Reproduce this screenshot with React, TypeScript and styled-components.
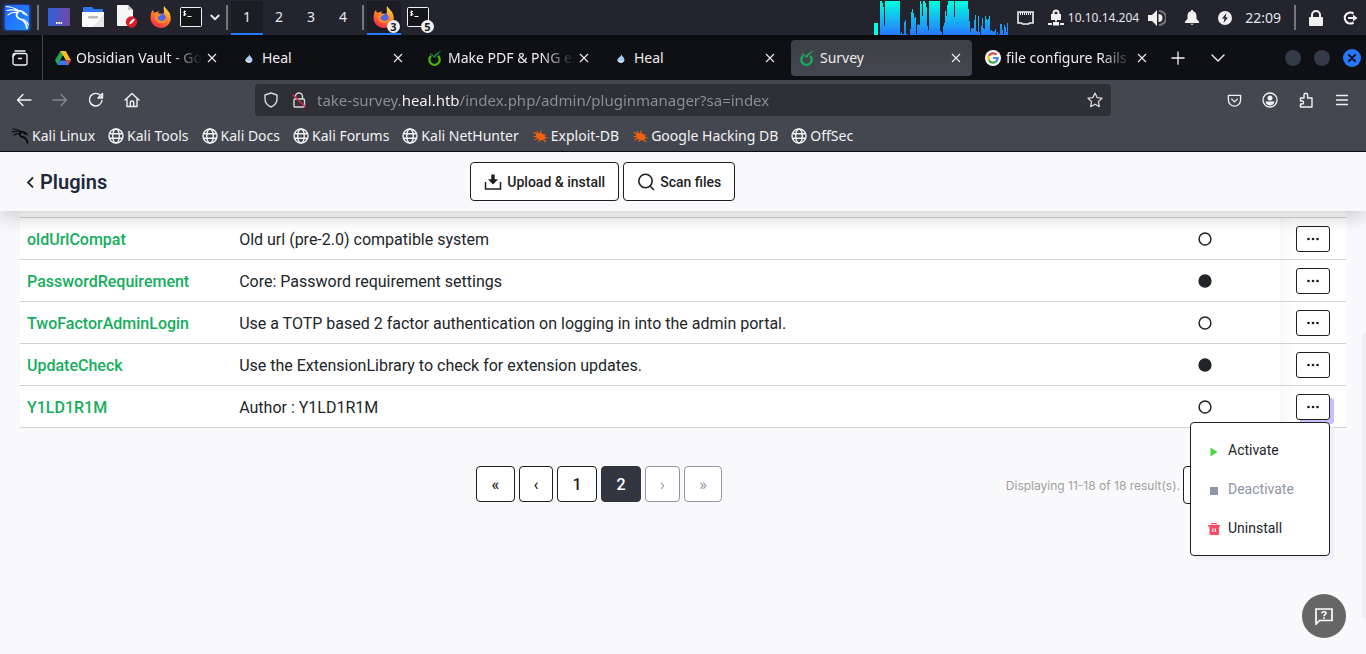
import React from "react";
import styled, { createGlobalStyle, css } from "styled-components";

const GlobalStyle = createGlobalStyle`
  * { box-sizing: border-box; }
  body { margin: 0; background: #f9f9fb; }
  button, input, select { font: inherit; }
  svg { display: block; flex: none; }
`;

const systemFont = `"Noto Sans", "Open Sans", sans-serif`;
const webFont = `Roboto, "Liberation Sans", sans-serif`;

const Screen = styled.div`
  display: flex;
  flex-direction: column;
  min-height: 100vh;
  overflow: hidden;
`;

/* ---------- Desktop panel ---------- */

const Panel = styled.header`
  display: flex;
  align-items: center;
  justify-content: space-between;
  height: 35px;
  background: #23242d;
  color: #e4e6ea;
  font-family: ${systemFont};
  padding: 0 8px 0 2px;
`;

const PanelGroup = styled.div<{ $gap?: number }>`
  display: flex;
  align-items: center;
  height: 100%;
  gap: ${(p) => p.$gap ?? 0}px;
`;

const PanelButton = styled.button<{ $width: number; $active?: boolean }>`
  position: relative;
  display: flex;
  align-items: center;
  justify-content: center;
  width: ${(p) => p.$width}px;
  height: 34px;
  padding: 0;
  border: 0;
  border-bottom: 2px solid ${(p) => (p.$active ? "#2777ff" : "transparent")};
  background: ${(p) => (p.$active ? "#1b1c24" : "transparent")};
  color: #e8e9ec;
  font-size: 14px;
`;

const Separator = styled.span`
  width: 2px;
  height: 25px;
  background: #75767b;
`;

const Badge = styled.span`
  position: absolute;
  right: 1px;
  bottom: 0;
  width: 13px;
  height: 13px;
  border-radius: 50%;
  background: #f0f0f0;
  color: #16171c;
  font-size: 11px;
  font-weight: 700;
  line-height: 13px;
  text-align: center;
`;

const Address = styled.span`
  font-size: 12px;
`;

const Clock = styled.time`
  font-size: 14px;
`;

/* ---------- Browser window ---------- */

const TabStrip = styled.nav`
  display: flex;
  align-items: center;
  height: 45px;
  background: linear-gradient(#0a0b0e, #0f1014 6px);
  color: #ececee;
  font-family: ${systemFont};
  padding-right: 5px;
`;

const ChromeButton = styled.button<{ $width?: number; $dim?: boolean }>`
  display: flex;
  align-items: center;
  justify-content: center;
  width: ${(p) => p.$width ?? 36}px;
  height: 32px;
  padding: 0;
  border: 0;
  background: none;
  color: ${(p) => (p.$dim ? "#85868b" : "#f2f2f4")};
`;

const ArchiveCell = styled.div`
  display: flex;
  align-items: center;
  width: 43px;
  height: 100%;
  padding-left: 2px;
  border-right: 1px solid #46474b;
  margin-right: 4px;
`;

const Tabs = styled.div`
  display: flex;
  gap: 5px;
`;

const Tab = styled.div<{ $active?: boolean }>`
  display: flex;
  align-items: center;
  gap: 5px;
  width: 181px;
  height: 36px;
  padding: 0 6px 0 8px;
  border-radius: 4px;
  background: ${(p) => (p.$active ? "linear-gradient(#3c3f45, #44474f)" : "transparent")};
`;

const TabTitle = styled.span<{ $fade?: boolean }>`
  flex: 1;
  min-width: 0;
  margin-right: -5px;
  overflow: hidden;
  white-space: nowrap;
  font-size: 14px;
  line-height: 20px;
  ${(p) =>
    p.$fade &&
    css`
      mask-image: linear-gradient(to left, transparent, #000 32px);
    `}
`;

const CloseTab = styled.button`
  display: flex;
  align-items: center;
  justify-content: center;
  width: 20px;
  height: 20px;
  padding: 0;
  border: 0;
  background: none;
  color: #ececee;
`;

const WindowControls = styled.div`
  display: flex;
  align-items: center;
  gap: 13px;
  margin-left: auto;
`;

const WindowDot = styled.button<{ $close?: boolean }>`
  display: flex;
  align-items: center;
  justify-content: center;
  width: ${(p) => (p.$close ? 18 : 16)}px;
  height: ${(p) => (p.$close ? 18 : 16)}px;
  padding: 0;
  border: 0;
  border-radius: 50%;
  color: #0d1524;
  background: ${(p) => (p.$close ? "#2777ff" : "#353a48")};
`;

const Toolbar = styled.div`
  display: flex;
  align-items: center;
  height: 40px;
  padding: 0 6px;
  background: #44474f;
  font-family: ${systemFont};
`;

const Spacer = styled.span`
  flex: 1;
`;

const UrlBar = styled.form`
  display: flex;
  align-items: center;
  flex: 8;
  height: 32px;
  padding: 0 8px;
  border-radius: 4px;
  background: #2f3035;
  color: #d8d8da;
`;

const UrlIcons = styled.span`
  display: flex;
  align-items: center;
  gap: 12px;
  margin-right: 10px;
`;

const UrlInput = styled.input`
  flex: 1;
  min-width: 0;
  height: 24px;
  padding: 0;
  border: 0;
  outline: 0;
  font-size: 15px;
  color: #8f9094;
  -webkit-text-fill-color: transparent;
  background: linear-gradient(to right, #8f9094 84px, #fbfbfe 84px, #fbfbfe 142px, #8f9094 142px);
  -webkit-background-clip: text;
  background-clip: text;
`;

const Bookmarks = styled.nav`
  display: flex;
  align-items: center;
  gap: 13px;
  height: 32px;
  padding: 0 12px;
  border-bottom: 1px solid #0d0e12;
  background: #44474f;
  font-family: ${systemFont};
`;

const Bookmark = styled.a`
  display: flex;
  align-items: center;
  gap: 3px;
  color: #f2f2f4;
  font-size: 14px;
  line-height: 20px;
  text-decoration: none;
`;

/* ---------- Plugin manager page ---------- */

const Page = styled.main`
  position: relative;
  flex: 1;
  background: #f9f9fb;
  color: #212529;
  font-family: ${webFont};
`;

const PageHeader = styled.div`
  position: relative;
  z-index: 1;
  display: grid;
  grid-template-columns: repeat(3, 1fr);
  align-items: center;
  height: 59px;
  background: #f9f9fb;
  box-shadow: 0 8px 16px rgba(0, 0, 0, 0.15);
`;

const BackLink = styled.a`
  display: flex;
  align-items: center;
  gap: 6px;
  padding-left: 26px;
  color: #1e2a3c;
  text-decoration: none;
`;

const PageTitle = styled.h1`
  margin: 0;
  font-size: 20px;
  font-weight: 600;
`;

const HeaderActions = styled.div`
  display: flex;
  gap: 4px;
  padding-left: 15px;
`;

const OutlineButton = styled.button`
  display: flex;
  align-items: center;
  gap: 4px;
  height: 39px;
  padding: 0 13px;
  border: 1px solid #1e1e1e;
  border-radius: 4px;
  background: #fff;
  color: #1e1e1e;
  font-size: 14px;
  font-weight: 500;
  white-space: nowrap;
`;

const PageBody = styled.div`
  padding: 0 20px;
`;

const PluginTable = styled.table`
  width: 100%;
  table-layout: fixed;
  border-spacing: 0;
  background: #fff;
`;

const HeadCell = styled.th<{ $width?: string }>`
  width: ${(p) => p.$width ?? "auto"};
  height: 7px;
  padding: 0;
  border-bottom: 1px solid #d0d2d6;
`;

const Cell = styled.td`
  height: 42px;
  padding: 2px 7px 0;
  border-bottom: 1px solid #d0d2d6;
  font-size: 16px;
  line-height: 24px;
`;

const StatusCell = styled(Cell)`
  padding: 0;
`;

const ActionCell = styled(Cell)`
  padding: 0 16px;
  background: linear-gradient(to right, #f8f8f8, #fff 16px);
`;

const PluginLink = styled.a`
  color: #14ae5c;
  font-weight: 500;
  text-decoration: none;
`;

const StatusMark = styled.svg`
  margin: 0 auto;
`;

const MenuAnchor = styled.div`
  position: relative;
  height: 26px;
`;

const MoreButton = styled.button<{ $open: boolean }>`
  display: flex;
  align-items: center;
  justify-content: center;
  width: 34px;
  height: 26px;
  padding: 0;
  border: 1px solid #1e1e1e;
  border-radius: 3px;
  background: #fff;
  color: #1e1e1e;
  box-shadow: ${(p) => (p.$open ? "4px 4px 0 #c9bfff" : "none")};
`;

const Menu = styled.ul`
  position: absolute;
  top: 28px;
  right: 0;
  z-index: 2;
  width: 140px;
  margin: 0;
  padding: 8px 0 7px;
  border: 1px solid #1e1e1e;
  border-radius: 4px;
  background: #fff;
  box-shadow: 4px 4px 0 #eeeff8;
  list-style: none;
`;

const MenuItem = styled.button`
  display: flex;
  align-items: center;
  gap: 7px;
  width: 100%;
  height: 39px;
  padding: 0 16px;
  border: 0;
  background: none;
  color: #212529;
  font-size: 14px;
  &:disabled {
    color: #9094a7;
  }
`;

const Footer = styled.div`
  display: grid;
  grid-template-columns: repeat(3, 1fr);
  align-items: start;
  margin-top: 38px;
`;

const Pager = styled.nav`
  display: flex;
  grid-column: 2;
  gap: 4px;
  padding-left: 14px;
`;

const PageButton = styled.button<{ $width: number; $current?: boolean }>`
  width: ${(p) => p.$width}px;
  height: 36px;
  padding: 0;
  border: 1px solid ${(p) => (p.$current ? "#333641" : "#1e1e1e")};
  border-radius: 4px;
  background: ${(p) => (p.$current ? "#333641" : "#fff")};
  color: ${(p) => (p.$current ? "#fff" : "#1e1e1e")};
  font-size: 16px;
  font-weight: 500;
  &:disabled {
    border-color: #9094a7;
    color: #9094a7;
    font-weight: 400;
  }
`;

const Summary = styled.div`
  display: flex;
  align-items: center;
  justify-content: flex-end;
  gap: 3px;
  padding-right: 16px;
  color: #a0a0a0;
  font-family: Inter, sans-serif;
  font-size: 12px;
  white-space: nowrap;
`;

const PageSize = styled.select`
  width: 147px;
  height: 38px;
  border: 1px solid #1e1e1e;
  border-radius: 4px;
  background: #fff;
  color: #1e1e1e;
  font-size: 16px;
`;

const HelpButton = styled.button`
  position: fixed;
  right: 20px;
  bottom: 16px;
  display: flex;
  align-items: center;
  justify-content: center;
  width: 44px;
  height: 44px;
  padding: 0;
  border: 0;
  border-radius: 50%;
  background: #666;
  color: #fff;
`;

const ScrollThumb = styled.span`
  position: absolute;
  top: 181px;
  right: 0;
  bottom: 36px;
  width: 4px;
  background: #f0f0f4;
`;

/* ---------- Drawings ---------- */

const KaliLogo = () => (
  <svg width="30" height="31" viewBox="0 0 30 31">
    <defs>
      <filter id="glow" x="-20%" y="-20%" width="140%" height="140%">
        <feGaussianBlur stdDeviation="1.5" />
      </filter>
      <linearGradient id="kali" x1="0" y1="0" x2="1" y2="1">
        <stop offset="0" stopColor="#1f60ff" />
        <stop offset="1" stopColor="#2490ff" />
      </linearGradient>
    </defs>
    <rect x="2" y="3" width="26" height="25" rx="2" fill="#1758e8" filter="url(#glow)" />
    <rect x="3" y="3" width="24" height="25" rx="2" fill="url(#kali)" />
    <g fill="none" stroke="#fff" strokeLinecap="round">
      <path d="M4 4.500c6 .5 9 1.500 12 4M5 8.500c4-1 7-1 11 .5M6 13c2-2 5-3 9-2.500" strokeWidth="1.200" />
      <path d="M14 8.500c5 0 8 1 10 4l-3-1.500" strokeWidth="1.500" />
      <path d="M16 10c-3 3-1 6 2 7 3 .8 6 3 7 9" strokeWidth="1.800" />
      <path d="M18 17c4 0 7 2 8.500 6" strokeWidth="1.100" />
    </g>
  </svg>
);

const DesktopIcon = () => (
  <svg width="22" height="18" viewBox="0 0 22 18">
    <defs>
      <linearGradient id="desk">
        <stop offset="0" stopColor="#2f62d9" />
        <stop offset="1" stopColor="#7548a8" />
      </linearGradient>
    </defs>
    <rect width="22" height="18" rx="1" fill="url(#desk)" />
    <path d="M8 14h1.500v2H8zm2.300 0h1.500v2h-1.500zm2.300 0h1.500v2h-1.500z" fill="#fff" />
  </svg>
);

const FolderIcon = () => (
  <svg width="22" height="20" viewBox="0 0 22 20">
    <path d="M1 1q0-1 1-1h8l2 2h8q1 0 1 1v4H1z" fill="#2f74f0" />
    <path d="M0 5h22v14q0 1-1 1H1q-1 0-1-1z" fill="#fafafa" />
    <path d="M22 7v13H11z" fill="#e8e8e8" />
    <rect x="6" y="9" width="10" height="2.500" rx="1.200" fill="#b9b9b9" />
  </svg>
);

const EditorIcon = () => (
  <svg width="22" height="23" viewBox="0 0 22 23">
    <path d="M1 1q0-1 1-1h10l5 5v15q0 1-1 1H2q-1 0-1-1z" fill="#f6f6f6" />
    <path d="M12 0l5 5h-5z" fill="#c8c8c8" />
    <circle cx="15.500" cy="17" r="5.700" fill="#d81e28" />
    <path d="M13 19.500l1-2.500 3.500-3.500 1.400 1.500-3.400 3.500z" fill="#fff" />
  </svg>
);

const FirefoxIcon = () => (
  <svg width="22" height="22" viewBox="0 0 22 22">
    <defs>
      <linearGradient id="fox" x1="0.8" y1="0" x2="0.3" y2="1">
        <stop offset="0" stopColor="#ffe14a" />
        <stop offset="0.45" stopColor="#ff8a2a" />
        <stop offset="1" stopColor="#f0264f" />
      </linearGradient>
    </defs>
    <path d="M14 0c1 2 3 3 4 5l1 1c4 7 1 15-8 16C3 22-1 15 1 8c0-2 1-3 2-4l1 3c1-1 2-1 3-1l3-1c-2 1-2 2-2 3h5c2-1 0-5 1-8z" fill="url(#fox)" />
    <circle cx="11" cy="12" r="4.700" fill="#4a5fe0" />
    <path d="M5 9c2-2 5-2 7 0-1 1-3 1-4 2-1 2 1 3 3 3 2 1 4-1 5-2 0 4-3 6-6 5-4-1-6-4-5-8z" fill="#ff8a25" />
    <circle cx="11.500" cy="12" r="3" fill="#4d6af0" />
  </svg>
);

const TerminalIcon = () => (
  <svg width="22" height="20" viewBox="0 0 22 20">
    <rect x=".5" y=".5" width="21" height="19" rx="1" fill="#15161a" stroke="#f2f2f2" />
    <path d="M6 4.500H4q-1 .8 0 1.500l1.500.5q1 .8 0 1.500H3M4.500 3.500V9M7.500 9.500h4" fill="none" stroke="#fff" />
  </svg>
);

const graphLevels = [
  34, 34, 32, 28, 9, 34, 34, 34, 34, 34, 34, 34, 34, 34, 34, 34, 34, 34, 34, 34, 1, 3, 1, 1, 13, 15, 1, 1, 0, 0, 6, 23, 26, 22, 17, 18, 1,
  10, 11, 10, 34, 31, 19, 34, 34, 32, 28, 9, 5, 34, 34, 34, 34, 34, 34, 34, 34, 34, 34, 34, 4, 3, 0, 9, 12, 24, 19, 30, 34, 34, 34,
  34, 34, 34, 18, 34, 34, 34, 34, 34, 34, 34, 34, 34, 34, 34, 34, 34, 26, 14, 3, 7, 6, 7, 15, 20, 4, 3, 19, 3, 0, 9, 17, 7, 6, 19, 16,
  15, 16, 19, 4, 5, 4, 3, 4, 6, 0, 3, 0, 1, 11, 11, 5, 1, 10, 8, 3, 12,
];

const CpuGraph = () => (
  <svg width="134" height="34" viewBox="0 0 134 34">
    <defs>
      <linearGradient id="cpu" gradientUnits="userSpaceOnUse" x1="0" y1="0" x2="0" y2="34">
        <stop offset="0" stopColor="#00ffe0" />
        <stop offset="1" stopColor="#2777ff" />
      </linearGradient>
    </defs>
    <rect x="0" y="22" width="4" height="12" fill="#00ffdc" />
    {graphLevels.map((level, i) => (
      <rect key={i} x={i + 6} y={34 - level} width="1" height={level} fill="url(#cpu)" />
    ))}
  </svg>
);

const EthernetIcon = () => (
  <svg width="17" height="14" viewBox="0 0 17 14">
    <path d="M1 1h15v11h-3.500l-1 1h-6l-1-1H1z" fill="none" stroke="#f0f0f0" strokeWidth="1.600" />
    <path d="M3.500 1v3M5.500 1v3M7.500 1v3M9.500 1v3M11.500 1v3M13.500 1v3" stroke="#f0f0f0" />
  </svg>
);

const VpnIcon = () => (
  <svg width="16" height="17" viewBox="0 0 16 17">
    <path d="M4.500 5V4a3.500 3.500 0 0 1 7 0v1H13v6H3V5zm2 0h3V4a1.500 1.500 0 0 0-3 0zM7 11h2v1.500H7zM0 14h4v2H0zM5 13h6v3.500H5zM12 14h4v2h-4z" fill="#f0f0f0" />
  </svg>
);

const VolumeIcon = () => (
  <svg width="18" height="16" viewBox="0 0 18 16">
    <path d="M0 5h4l5-5v16l-5-5H0zM10.500 4a4 4 0 0 1 0 8z" fill="#f0f0f0" />
    <path d="M11 1a7 7 0 0 1 0 14" fill="none" stroke="#74757b" strokeWidth="2" />
  </svg>
);

const BellIcon = () => (
  <svg width="14" height="15" viewBox="0 0 14 15">
    <path d="M6 0h2v1.300C11 2 11.500 4 11.500 7v2l2.500 2.500V13H0v-1.500L2.500 9V7C2.500 4 3 2 6 1.300zM5 13.800h4L7 15z" fill="#f0f0f0" />
  </svg>
);

const PowerIcon = () => (
  <svg width="14" height="14" viewBox="0 0 14 14">
    <circle cx="7" cy="7" r="7" fill="#f0f0f0" />
    <path d="M8.500 2L4 7.500h2.500L5.500 12 10 6.500H7.500z" fill="#23242d" />
  </svg>
);

const PadlockIcon = () => (
  <svg width="14" height="16" viewBox="0 0 14 16">
    <path d="M2 7V5a5 5 0 0 1 10 0v2h1q1 0 1 1v7q0 1-1 1H1q-1 0-1-1V8q0-1 1-1zm2 0h6V5a3 3 0 0 0-6 0z" fill="#f0f0f0" />
  </svg>
);

const LogoutIcon = () => (
  <svg width="15" height="14" viewBox="0 0 15 14">
    <path d="M10.500 2.500A5.500 5.500 0 1 0 10.500 11.500" fill="none" stroke="#f0f0f0" strokeWidth="2.200" />
    <path d="M5 6h5V3.500L14.500 7 10 10.500V8H5z" fill="#f0f0f0" />
  </svg>
);

const ArchiveIcon = () => (
  <svg width="16" height="16" viewBox="0 0 16 16" fill="none" stroke="currentColor" strokeLinecap="round" strokeWidth="1.300">
    <path d="M3 1h10" />
    <rect x="1" y="3.500" width="14" height="11.500" rx="2" />
    <path d="M1 7q0-2 2-2.500M6.500 8.500h3" />
  </svg>
);

const CrossIcon = () => (
  <svg width="10" height="10" viewBox="0 0 10 10">
    <path d="M1 1l8 8M9 1L1 9" stroke="currentColor" strokeWidth="1.100" />
  </svg>
);

const DriveIcon = () => (
  <svg width="16" height="16" viewBox="0 0 15 15">
    <path d="M5 1h5l-5 8.500L2.500 14 0 9.700z" fill="#22a25a" />
    <path d="M5 1h5l5 8.700h-5z" fill="#fcbc1e" />
    <path d="M0 9.700L2.500 14h10L15 9.700H5L2.500 14z" fill="#3a79ee" />
    <path d="M15 9.700h-5l2.500 4.300z" fill="#e5402f" />
    <path d="M7.500 5.200l2.600 4.500H4.900z" fill="#0f1014" />
  </svg>
);

const DropIcon = () => (
  <svg width="16" height="16" viewBox="0 0 16 16">
    <path d="M8.500 4.500c.3 1.800 3 3 3 5.300 0 1.700-1.700 2.700-3.500 2.700s-3.500-1-3.500-2.700c0-2 3.400-2.800 4-5.300z" fill="#a9cdf0" />
    <path d="M4.300 9.500c1 2.500 5.500 2.500 7 1-.6 1.700-2 2.300-3.500 2.300s-3.500-1-3.500-3.300z" fill="#f4f8fc" />
  </svg>
);

const SurveyIcon = ({ color, leaf }: { color: string; leaf: string }) => (
  <svg width="16" height="16" viewBox="0 0 16 16">
    <path d="M4 5.800A5.200 5.200 0 1 0 11 5.800" fill="none" stroke={color} strokeWidth="2.300" />
    <path d="M3 2.500L7 6c2-3 4-4 8-5.500C11 4 9 6 7.500 8L3 4z" fill={leaf} />
  </svg>
);

const GoogleIcon = () => (
  <svg width="16" height="16" viewBox="0 0 16 16">
    <circle cx="8" cy="8" r="8" fill="#fff" />
    <g fill="none" strokeWidth="2.200">
      <path d="M11.500 4.800A4.700 4.700 0 0 0 3.900 5.800" stroke="#ea4335" />
      <path d="M3.900 5.800A4.700 4.700 0 0 0 3.900 10.200" stroke="#fbbc05" />
      <path d="M3.900 10.200A4.700 4.700 0 0 0 11 11.600" stroke="#34a853" />
      <path d="M11 11.600A4.700 4.700 0 0 0 12.700 8H8" stroke="#4285f4" />
    </g>
  </svg>
);

const GlobeIcon = () => (
  <svg width="16" height="16" viewBox="0 0 16 16" fill="none" stroke="#f2f2f4" strokeWidth="1.400">
    <circle cx="8" cy="8" r="7" />
    <ellipse cx="8" cy="8" rx="3.300" ry="7" />
    <path d="M1.500 5.700h13M1.500 10.300h13" />
  </svg>
);

const DragonIcon = () => (
  <svg width="17" height="16" viewBox="0 0 17 16" fill="none" stroke="#0b0b0d" strokeLinecap="round">
    <path d="M1 1c4 0 6 1 8 3M0 4c3-1 6-1 9 0M2 7c2-1 4-2 6-1" strokeWidth="1.200" />
    <path d="M8 3.500c3 0 5 .5 6.500 2.500l-3-1" strokeWidth="1.500" />
    <path d="M9 4.500c-2 2-1 4 1.500 4.500 3 .6 4.500 2 5 6" strokeWidth="1.800" />
  </svg>
);

const BugIcon = () => (
  <svg width="16" height="16" viewBox="0 0 16 16">
    <ellipse cx="8.500" cy="8.500" rx="5" ry="3.300" transform="rotate(28 8.500 8.500)" fill="#f2600c" />
    <path
      d="M4.500 6L1.500 4M5 5.500L5.500 3M8.500 5.500L9 2.500M11 7l3 0M13 9.500l2.500.5M5 8.500L1.500 8.500M6 10l-3.500 2M8.500 11.500L6.500 13.500M11.500 11.500l2.500 2.500"
      fill="none"
      stroke="#f2600c"
      strokeWidth="1.100"
    />
  </svg>
);

const Stroke = ({ d, size = 16, width = 1.4 }: { d: string; size?: number; width?: number }) => (
  <svg width={size} height={size} viewBox="0 0 16 16" fill="none" stroke="currentColor" strokeWidth={width} strokeLinecap="round" strokeLinejoin="round">
    <path d={d} />
  </svg>
);

const InsecureIcon = () => (
  <svg width="16" height="16" viewBox="0 0 16 16" fill="none" strokeWidth="1.400">
    <path d="M4.500 7V4.500a3.500 3.500 0 0 1 7 0V7" stroke="#d8d8da" />
    <rect x="3" y="7" width="10.500" height="8" rx="1" stroke="#d8d8da" />
    <path d="M1.500 2.500l13 12.500" stroke="#e22850" strokeWidth="1.500" />
  </svg>
);

const AccountIcon = () => (
  <svg width="16" height="16" viewBox="0 0 16 16">
    <circle cx="8" cy="8" r="7" fill="none" stroke="currentColor" strokeWidth="1.300" />
    <circle cx="8" cy="6" r="2.500" fill="currentColor" />
    <path d="M3.500 9.500h9q-1 4-4.500 4t-4.500-4z" fill="currentColor" />
  </svg>
);

const UploadIcon = () => (
  <svg width="19" height="18" viewBox="0 0 19 18">
    <path d="M1.500 9v7h15V9" fill="none" stroke="currentColor" strokeWidth="1.500" />
    <path d="M7.300 1.500h3.400v4.800H14L9 11.500 4 6.300h3.300z" fill="currentColor" />
  </svg>
);

const SearchIcon = () => (
  <svg width="19" height="18" viewBox="0 0 19 18" fill="none" stroke="currentColor" strokeWidth="1.600">
    <circle cx="8.500" cy="8" r="6.700" />
    <path d="M13 13l4 4" />
  </svg>
);

const StatusIcon = ({ on }: { on: boolean }) => (
  <StatusMark width="14" height="14" viewBox="0 0 14 14" role="img" aria-label={on ? "Active" : "Inactive"}>
    <circle cx="7" cy="7" r="5.900" fill={on ? "#212529" : "none"} stroke="#212529" strokeWidth="1.500" />
  </StatusMark>
);

const DotsIcon = () => (
  <svg width="12" height="4" viewBox="0 0 12 4" fill="currentColor">
    <circle cx="1.500" cy="2" r="1.350" />
    <circle cx="6" cy="2" r="1.350" />
    <circle cx="10.500" cy="2" r="1.350" />
  </svg>
);

const PlayIcon = () => (
  <svg width="14" height="14" viewBox="0 0 14 14">
    <path d="M3.500 4.500l7 4.500-7 4.500z" fill="#4fd44f" />
  </svg>
);

const StopIcon = () => (
  <svg width="14" height="14" viewBox="0 0 14 14">
    <path d="M3 5h8v8H3z" fill="#9094a7" />
  </svg>
);

const TrashIcon = () => (
  <svg width="14" height="14" viewBox="0 0 14 14">
    <path d="M4.500 2h5v2H13v1.500h-1V14H2.500V5.500H1V4h3.500zm1 1v1h3V3z" fill="#fd4a5e" />
    <path d="M5.800 7.500v3.500M8.400 7.500v3.500" stroke="#fff" strokeWidth="1.200" />
  </svg>
);

const HelpIcon = () => (
  <svg width="18" height="18" viewBox="0 0 18 18" fill="none" stroke="currentColor">
    <path d="M1 17V2h16v11.500H4.500z" strokeWidth="1.700" />
    <path d="M7 6.300q0-1.500 2-1.500t2 1.300q0 .9-1 1.500T9 9.300M9 10.300v1.500" strokeWidth="1.600" />
  </svg>
);

/* ---------- Content ---------- */

const tabs = [
  { title: "Obsidian Vault - Goo", icon: <DriveIcon />, fade: true },
  { title: "Heal", icon: <DropIcon /> },
  { title: "Make PDF & PNG ex", icon: <SurveyIcon color="#43b60c" leaf="#128a3c" />, fade: true },
  { title: "Heal", icon: <DropIcon /> },
  { title: "Survey", icon: <SurveyIcon color="#14ae5c" leaf="#14ae5c" />, active: true },
  { title: "file configure Rails v", icon: <GoogleIcon />, fade: true },
];

const bookmarks = [
  { title: "Kali Linux", icon: <DragonIcon /> },
  { title: "Kali Tools", icon: <GlobeIcon /> },
  { title: "Kali Docs", icon: <GlobeIcon /> },
  { title: "Kali Forums", icon: <GlobeIcon /> },
  { title: "Kali NetHunter", icon: <GlobeIcon /> },
  { title: "Exploit-DB", icon: <BugIcon /> },
  { title: "Google Hacking DB", icon: <BugIcon /> },
  { title: "OffSec", icon: <GlobeIcon /> },
];

const plugins = [
  { name: "oldUrlCompat", description: "Old url (pre-2.0) compatible system", active: false },
  { name: "PasswordRequirement", description: "Core: Password requirement settings", active: true },
  {
    name: "TwoFactorAdminLogin",
    description: "Use a TOTP based 2 factor authentication on logging in into the admin portal.",
    active: false,
  },
  { name: "UpdateCheck", description: "Use the ExtensionLibrary to check for extension updates.", active: true },
  { name: "Y1LD1R1M", description: "Author : Y1LD1R1M", active: false, open: true },
];

const DesktopPanel = () => (
  <Panel>
    <PanelGroup>
      <PanelGroup $gap={5}>
        <KaliLogo />
        <Separator />
      </PanelGroup>
      <PanelButton $width={40} aria-label="Show desktop"><DesktopIcon /></PanelButton>
      <PanelButton $width={28} aria-label="Files"><FolderIcon /></PanelButton>
      <PanelButton $width={40} aria-label="Text editor"><EditorIcon /></PanelButton>
      <PanelButton $width={28} aria-label="Firefox"><FirefoxIcon /></PanelButton>
      <PanelButton $width={32} aria-label="Terminal"><TerminalIcon /></PanelButton>
      <PanelButton $width={16} aria-label="More terminals"><Stroke size={12} width={2.4} d="M3 6l5 5 5-5" /></PanelButton>
      <PanelGroup $gap={3}>
        <span />
        <Separator />
        <PanelGroup>
          {["1", "2", "3", "4"].map((n) => (
            <PanelButton key={n} $width={32} $active={n === "1"}>{n}</PanelButton>
          ))}
        </PanelGroup>
        <Separator />
        <PanelGroup>
          <PanelButton $width={34} $active aria-label="Firefox windows"><FirefoxIcon /><Badge>3</Badge></PanelButton>
          <PanelButton $width={34} aria-label="Terminal windows"><TerminalIcon /><Badge>5</Badge></PanelButton>
        </PanelGroup>
      </PanelGroup>
    </PanelGroup>
    <PanelGroup $gap={13}>
      <PanelGroup $gap={9}>
        <CpuGraph />
        <PanelGroup $gap={14}>
          <EthernetIcon />
          <PanelGroup $gap={4}><VpnIcon /><Address>10.10.14.204</Address></PanelGroup>
        </PanelGroup>
        <PanelGroup $gap={19}><VolumeIcon /><BellIcon /><PowerIcon /></PanelGroup>
      </PanelGroup>
      <Clock>22:09</Clock>
      <Separator />
      <PanelGroup $gap={20}><PadlockIcon /><LogoutIcon /></PanelGroup>
    </PanelGroup>
  </Panel>
);

const Browser = () => (
  <>
    <TabStrip>
      <ArchiveCell>
        <ChromeButton aria-label="Firefox View"><ArchiveIcon /></ChromeButton>
      </ArchiveCell>
      <Tabs>
        {tabs.map((tab, i) => (
          <Tab key={i} $active={tab.active}>
            {tab.icon}
            <TabTitle $fade={tab.fade}>{tab.title}</TabTitle>
            <CloseTab aria-label="Close tab"><CrossIcon /></CloseTab>
          </Tab>
        ))}
      </Tabs>
      <ChromeButton $width={40} aria-label="New tab"><Stroke size={14} d="M8 1v14M1 8h14" width={1.5} /></ChromeButton>
      <ChromeButton $width={40} aria-label="List all tabs"><Stroke d="M2 5l6 6 6-6" /></ChromeButton>
      <WindowControls>
        <WindowDot aria-label="Minimize" />
        <WindowDot aria-label="Maximize" />
        <WindowDot $close aria-label="Close"><Stroke size={12} width={3} d="M4 4l8 8M12 4l-8 8" /></WindowDot>
      </WindowControls>
    </TabStrip>
    <Toolbar>
      <ChromeButton aria-label="Back"><Stroke d="M15 8H1.500M7 2.500L1.500 8 7 13.500" /></ChromeButton>
      <ChromeButton $dim aria-label="Forward"><Stroke d="M1 8h13.500M9 2.500L14.500 8 9 13.500" /></ChromeButton>
      <ChromeButton aria-label="Reload"><Stroke d="M14 8.500A6.300 6.300 0 1 1 12.500 3.500L14 5M14.500 1.500V6H10z" /></ChromeButton>
      <ChromeButton aria-label="Home"><Stroke d="M1 8l7-6.500L15 8M3 7v7.500h10V7M6.300 14.500V10.500q0-1.500 1.700-1.500t1.700 1.500v4" /></ChromeButton>
      <Spacer />
      <UrlBar>
        <UrlIcons>
          <Stroke d="M8 1l6 2v4c0 4-2.500 6.500-6 8-3.500-1.500-6-4-6-8V3z" />
          <InsecureIcon />
        </UrlIcons>
        <UrlInput aria-label="Address" defaultValue="take-survey.heal.htb/index.php/admin/pluginmanager?sa=index" />
        <Stroke d="M8 1l2.100 4.600 4.900.6-3.600 3.400.9 5L8 12.200l-4.300 2.400.9-5L1 6.200l4.900-.6z" width={1.3} />
      </UrlBar>
      <Spacer />
      <ChromeButton aria-label="Pocket"><Stroke size={15} d="M1.500 2.500h13v5a6.500 6.500 0 0 1-13 0zM5 6.500l3 3 3-3" /></ChromeButton>
      <ChromeButton aria-label="Account"><AccountIcon /></ChromeButton>
      <ChromeButton aria-label="Extensions"><Stroke d="M2.500 6h3.500V3a1.800 1.800 0 0 1 3.600 0v3H14v9H2.500v-3h1.500a1.500 1.500 0 0 0 0-3H2.500z" /></ChromeButton>
      <ChromeButton aria-label="Menu"><Stroke d="M2.500 3.500h11M2.500 8h11M2.500 12.500h11" width={1.3} /></ChromeButton>
    </Toolbar>
    <Bookmarks>
      {bookmarks.map((b) => (
        <Bookmark key={b.title} href="#">{b.icon}{b.title}</Bookmark>
      ))}
    </Bookmarks>
  </>
);

const PluginMenu = () => (
  <Menu>
    <li><MenuItem><PlayIcon />Activate</MenuItem></li>
    <li><MenuItem disabled><StopIcon />Deactivate</MenuItem></li>
    <li><MenuItem><TrashIcon />Uninstall</MenuItem></li>
  </Menu>
);

export default function App() {
  return (
    <Screen>
      <GlobalStyle />
      <DesktopPanel />
      <Browser />
      <Page>
        <PageHeader>
          <BackLink href="#">
            <svg width="8" height="12" viewBox="0 0 8 12">
              <path d="M7 1.500L2 6.500l5 5" fill="none" stroke="currentColor" strokeWidth="1.800" />
            </svg>
            <PageTitle>Plugins</PageTitle>
          </BackLink>
          <HeaderActions>
            <OutlineButton><UploadIcon />Upload &amp; install</OutlineButton>
            <OutlineButton><SearchIcon />Scan files</OutlineButton>
          </HeaderActions>
        </PageHeader>
        <PageBody>
          <PluginTable>
            <thead>
              <tr>
                <HeadCell $width="16%" aria-label="Plugin" />
                <HeadCell aria-label="Description" />
                <HeadCell $width="150px" aria-label="Status" />
                <HeadCell $width="66px" aria-label="Action" />
              </tr>
            </thead>
            <tbody>
              {plugins.map((p) => (
                <tr key={p.name}>
                  <Cell><PluginLink href="#">{p.name}</PluginLink></Cell>
                  <Cell>{p.description}</Cell>
                  <StatusCell><StatusIcon on={p.active} /></StatusCell>
                  <ActionCell>
                    <MenuAnchor>
                      <MoreButton $open={!!p.open} aria-label="Actions"><DotsIcon /></MoreButton>
                      {p.open && <PluginMenu />}
                    </MenuAnchor>
                  </ActionCell>
                </tr>
              ))}
            </tbody>
          </PluginTable>
          <Footer>
            <Pager aria-label="Pages">
              <PageButton $width={39}>«</PageButton>
              <PageButton $width={34}>‹</PageButton>
              <PageButton $width={40}>1</PageButton>
              <PageButton $width={40} $current>2</PageButton>
              <PageButton $width={35} disabled>›</PageButton>
              <PageButton $width={38} disabled>»</PageButton>
            </Pager>
            <Summary>
              <span>Displaying 11-18 of 18 result(s).</span>
              <PageSize aria-label="Results per page" />
            </Summary>
          </Footer>
        </PageBody>
        <ScrollThumb />
        <HelpButton aria-label="Help"><HelpIcon /></HelpButton>
      </Page>
    </Screen>
  );
}
